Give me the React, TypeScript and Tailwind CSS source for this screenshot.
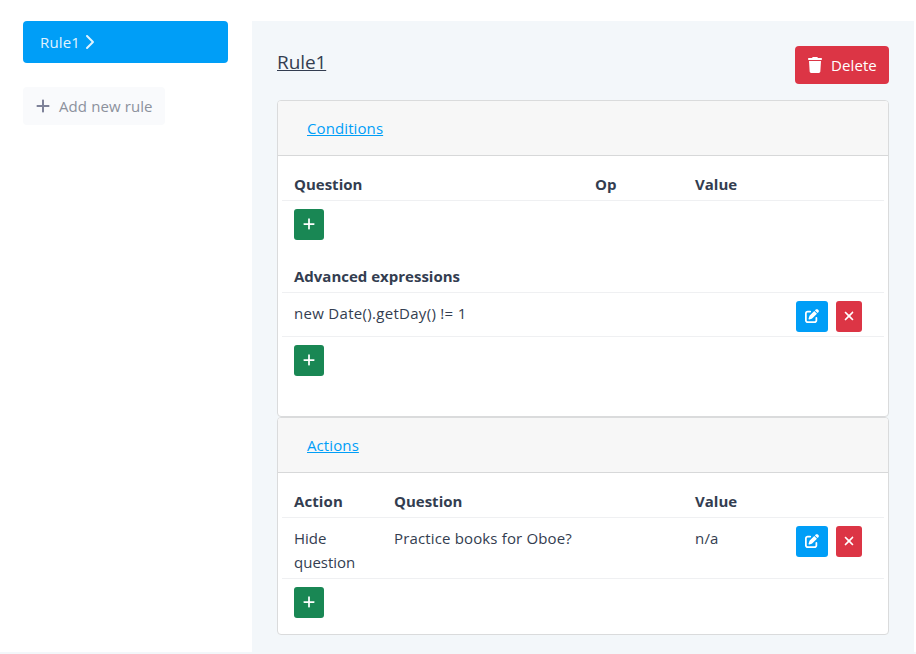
import type { ReactNode } from "react";
import { FaChevronRight, FaPlus, FaTrash, FaPenToSquare, FaXmark } from "react-icons/fa6";

function AddButton() {
  return (
    <button className="flex h-[31px] w-[30px] justify-center rounded-[3px] bg-[#198754] pt-2 text-white">
      <FaPlus className="size-3.5" />
    </button>
  );
}

function RowButtons() {
  return (
    <div className="flex gap-2">
      <button className="flex h-[31px] w-8 justify-center rounded-[3px] bg-[#009ef7] pt-2 text-white">
        <FaPenToSquare className="size-3.5" />
      </button>
      <button className="flex h-[31px] w-[26px] justify-center rounded-[3px] bg-[#dc3545] pt-2 text-white">
        <FaXmark className="size-3.5" />
      </button>
    </div>
  );
}

function Card({ title, children }: { title: string; children: ReactNode }) {
  return (
    <section className="overflow-hidden rounded-[4px] border border-[#dadbdc] bg-white">
      <header className="flex h-[55px] items-center border-b border-[#d7d8d9] bg-[#f7f7f7] pl-[29px]">
        <a className="tracking-[0.1px] text-[#009ef7] underline underline-offset-1">{title}</a>
      </header>
      <div className="px-1">{children}</div>
    </section>
  );
}

export default function App() {
  return (
    <div className="flex h-[654px] w-[916px] flex-col bg-white pt-[21px] font-['Open_Sans','Noto_Sans',sans-serif] text-[15px] leading-6 text-[#333d50]">
      <div className="flex h-[631px]">
        <aside className="w-[252px] pl-[23px]">
          <a className="flex h-[42px] w-[205px] items-center rounded-[4px] bg-[#009ef7] pl-[17px] text-[#e0f3fe]">
            <span className="tracking-[0.15px]">Rule1</span>
            <FaChevronRight className="ml-px size-4" />
          </a>
          <button className="mt-6 flex h-[38px] w-[142px] items-center rounded-[4px] bg-[#f9fafc] pl-3 text-[#8c919c]">
            <FaPlus className="size-4 text-[#7e8299]" />
            <span className="ml-2 tracking-[0.1px]">Add new rule</span>
          </button>
        </aside>
        <main className="h-[633px] w-[662px] bg-[#f3f7fa] px-[25px] pt-[25px]">
          <div className="flex h-[54px] items-start justify-between">
            <h1 className="mt-1 text-[19px] tracking-[-0.1px] underline underline-offset-1">Rule1</h1>
            <button className="flex h-[38px] w-[94px] items-center rounded-[4px] bg-[#dc3545] pl-3 text-white">
              <FaTrash className="size-4" />
              <span className="ml-2 tracking-[0.1px]">Delete</span>
            </button>
          </div>
          <Card title="Conditions">
            <div className="grid h-[45px] grid-cols-[301px_100px_1fr] border-b border-[#eff0f2] pt-4 pl-3 font-bold">
              <span>Question</span>
              <span>Op</span>
              <span>Value</span>
            </div>
            <div className="h-[47px] pt-2 pl-3">
              <AddButton />
            </div>
            <div className="h-[45px] border-b border-[#eff0f2] pt-4 pl-3 font-bold">Advanced expressions</div>
            <div className="flex h-11 justify-between border-b border-[#eff0f2] pt-2 pr-[22px] pl-3">
              <span className="tracking-[0.3px]">new Date().getDay() != 1</span>
              <RowButtons />
            </div>
            <div className="h-[79px] pt-2 pl-3">
              <AddButton />
            </div>
          </Card>
          <Card title="Actions">
            <div className="grid h-[45px] grid-cols-[100px_301px_1fr] border-b border-[#eff0f2] pt-4 pl-3 font-bold">
              <span className="tracking-[0.1px]">Action</span>
              <span>Question</span>
              <span>Value</span>
            </div>
            <div className="grid h-[61px] grid-cols-[100px_301px_101px_1fr] border-b border-[#eff0f2] pt-2 pl-3">
              <span className="w-[76px]">Hide question</span>
              <span className="tracking-[0.15px]">Practice books for Oboe?</span>
              <span className="tracking-[0.2px]">n/a</span>
              <RowButtons />
            </div>
            <div className="h-[55px] pt-2 pl-3">
              <AddButton />
            </div>
          </Card>
        </main>
      </div>
      <div className="h-0.5 w-[916px] bg-[#f3f7fa]" />
    </div>
  );
}
